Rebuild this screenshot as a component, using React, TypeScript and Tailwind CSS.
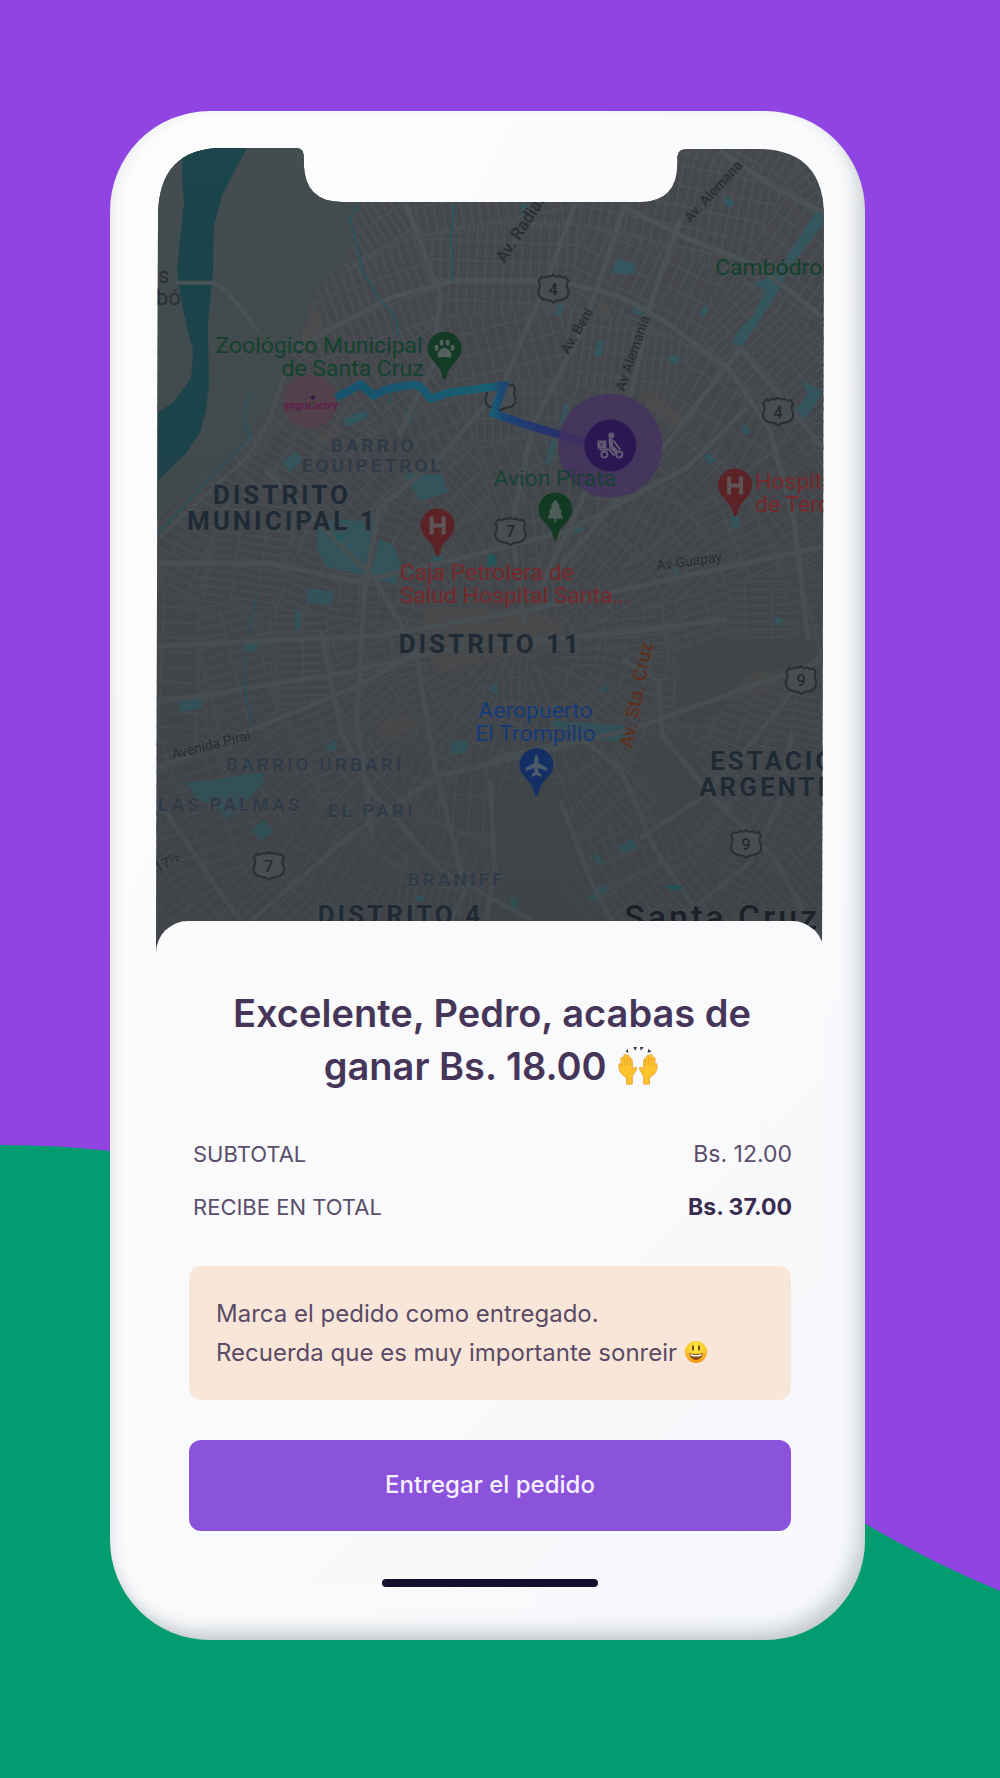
import type { ReactNode } from "react";

const CENTER = { x: 530, y: 640 };
const RINGS = [0, 70, 140, 205, 262, 335, 420, 520, 640];
const SECTORS = 16;

function polar(radius: number, turn: number) {
  const angle = (turn / SECTORS) * Math.PI * 2 + 0.12;
  const x = CENTER.x + Math.cos(angle) * radius;
  const y = CENTER.y + Math.sin(angle) * radius;
  return `${x.toFixed(1)} ${y.toFixed(1)}`;
}

const blocks = RINGS.slice(1).flatMap((outer, ring) =>
  Array.from({ length: SECTORS }, (_, s) => ({
    id: `${ring}-${s}`,
    pattern: (s * 3 + ring * 5) % 8,
    turn: (s / SECTORS) * 360 + ((ring * 17) % 30),
    d: `M${polar(RINGS[ring], s)} L${polar(outer, s)} A${outer} ${outer} 0 0 1 ${polar(outer, s + 1)} L${polar(RINGS[ring], s + 1)} Z`,
  })),
);

const parks = [
  "M521 203l8 0-2 14-6-3z",
  "M617 258l19 5-3 11-22-2z",
  "M558 302l5 0-2 12-7 1z",
  "M635 304l8 1-1 10-9-3z",
  "M598 339l6 1-3 16-7-1z",
  "M672 353l8 4-5 7-7-5z",
  "M704 305l5 3-6 9-4-4z",
  "M726 195l9 6-4 6-8-5z",
  "M816 210l7 2v12L796 258 770 304 742 345l-10-1 6-14 14-14 14-26-12-8 14-5 20-22z",
  "M801 379l22 12-18 28-9-10 12-17z",
  "M745 424l6 7-5 4-6-7z",
  "M707 452l9 7-6 6-7-8z",
  "M730 513l8 1 3 12-9 2z",
  "M564 402l5 2-5 14-6 10z",
  "M552 437l4 7-6 18-6 3 4-15z",
  "M404 473l38 1 5 18-28 8z",
  "M343 418l22-9 2 8-22 10z",
  "M404 410l9 0-4 14-3 0z",
  "M282 461l14-10 5 9-12 12z",
  "M317 525l16-6 41 2-11 54-38-9-9-18z",
  "M378 539l14 5 8 19-5 21-26-6z",
  "M306 588l28 3-5 14-23-3z",
  "M294 610l6 0 0 20-6 0z",
  "M431 555l12 0-1 10-10 0z",
  "M244 643l13 0-1 8-12 0z",
  "M177 702l23-4 1 10-22 4z",
  "M184 782l28-2 34-6 12-1 5 10-12 12-25 25-11-13-18-8z",
  "M263 820l10 11-13 10-10-11z",
  "M323 748l12-9 1 13z",
  "M449 744l12-5 8 5-4 9-14 1z",
  "M490 685l7-1 0 9-6 0z",
  "M600 688l8-5-3 9-6-2z",
  "M552 720l72 5-4 18-28-5-40-12z",
  "M617 847l15-9 6 10-15 6z",
  "M592 856l6-3 5 12-5 0z",
  "M587 898l18-14 5 5-17 13z",
  "M509 900l9-3-2 12-5 1z",
  "M415 896l9 0-1 6-8 0z",
  "M774 617l8 1-1 8-7-1z",
  "M573 530l6-6 4 5-8 5z",
  "M672 567l4 2 5 10-3 1z",
];

const sandy = [
  "M310 308l8 2 4 20-22 12z",
  "M635 390l20 3 34 27-10 9-30-24z",
  "M424 606l90 2 50 14-8 22-120 30-14-30z",
  "M376 722l30-8 18 8-30 16-16 4z",
  "M730 690l22-18 34-3-10 20-45 12z",
  "M314 438l24-15 4 10-25 12z",
  "M597 300l10 2 4 14-10-2z",
];

const avenues = [
  "M175 282h34c14 1 20 12 44 44",
  "M292 350l42-24 58-30 60-16h108l60 16 44 24 66 50 40 60 24 90 14 120",
  "M405 203l35 92-8 70-34 70",
  "M575 203l-34 90-38 90-60 70-65 56-14 80-8 130 16 120",
  "M625 203l-40 120-52 100-22 100 12 100",
  "M628 208l60 30 68 26 66 52",
  "M680 218l-28 80-20 90-40 90-52 110",
  "M720 150l50 34 54 28",
  "M740 348l84 100",
  "M740 348l-70 90-120 140",
  "M157 563l110 0 90 18 90-20 120-30 120-64 60-60",
  "M157 646l120-6 100-4 150-26 296-64",
  "M157 702l190-30 110-25 180-16 90-12",
  "M157 768l200-82 60-34",
  "M157 800l60 90 30 40",
  "M240 930l110-95 90-60 110-25 90-24 184-66",
  "M265 470l110 110 40 70 20 120 30 120-30 60",
  "M320 630l20 100 30 60 70 80 90 50",
  "M490 760l90-22 40 30 34 80 40 60",
  "M622 660l36 20 4 56 50 60 60 60 52 90",
  "M640 838l60-40 54-58 70-90",
  "M690 912l60-50 30-60 12-70",
  "M490 780l4 90-10 60",
  "M560 800l30 80 26 50",
];

type LabelProps = {
  x: number;
  y: number;
  children: ReactNode;
  className?: string;
  anchor?: "start" | "middle" | "end";
  turn?: number;
};

function Label({ x, y, children, className = "", anchor = "start", turn = 0 }: LabelProps) {
  return (
    <text
      x={x}
      y={y}
      textAnchor={anchor}
      transform={turn ? `rotate(${turn} ${x} ${y})` : undefined}
      className={`stroke-[#45494d] [paint-order:stroke] [stroke-width:2px] ${className}`}
    >
      {children}
    </text>
  );
}

function Shield({ x, y, n }: { x: number; y: number; n: string }) {
  return (
    <g transform={`translate(${x} ${y})`}>
      <path
        d="M-12-12q3 2 6-1 3 2 6-1 3 3 6 1 3 3 6 1l3 4q-3 4 0 9 1 9-8 10-4 0-7 3-3-3-7-3-9-1-8-10 3-5 0-9z"
        className="fill-[#474d50] stroke-[#2a2f33] [stroke-width:2px]"
      />
      <text y="6" textAnchor="middle" className="fill-[#23292e] text-[16px] font-medium">
        {n}
      </text>
    </g>
  );
}

function Pin({ x, y, className, children }: { x: number; y: number; className: string; children: ReactNode }) {
  return (
    <g transform={`translate(${x} ${y})`}>
      <path
        d="M0 31C-2 31-2 27-4 22-7 15-17 10-17 0A17 17 0 0 1 17 0C17 10 7 15 4 22 2 27 2 31 0 31z"
        className={className}
      />
      {children}
    </g>
  );
}

const HOSPITAL_MARK = "M-6-9v18M6-9v18M-6 0h12";

function CityMap() {
  return (
    <svg
      viewBox="155 147 669 806"
      role="img"
      aria-label="Mapa de la ruta de entrega"
      className="block h-auto w-full font-[Roboto,sans-serif]"
    >
      <defs>
        <clipPath id="screen">
          <path d="M155 953L157 216Q157 147 222 147H295Q303 147 303 155V163Q304 201 341 201H641Q677 200 677 163V156Q678 148 686 148H757Q824 148 824 216L822 953z" />
        </clipPath>
        <linearGradient id="dim" x1="0" y1="0" x2="0" y2="1">
          <stop offset="0" stopColor="#30363a" stopOpacity="0" />
          <stop offset="1" stopColor="#30363a" stopOpacity="0.3" />
        </linearGradient>
        <linearGradient id="route" gradientUnits="userSpaceOnUse" x1="335" y1="0" x2="600" y2="0">
          <stop offset="0" stopColor="#17526c" />
          <stop offset="0.58" stopColor="#175f72" />
          <stop offset="0.64" stopColor="#1c4474" />
          <stop offset="1" stopColor="#301f64" />
        </linearGradient>
        {blocks.map((b) => (
          <pattern
            key={b.id}
            id={`streets-${b.id}`}
            width={[24, 30, 20, 34, 26, 22, 38, 28][b.pattern]}
            height={[8, 10, 9, 13, 8, 11, 15, 9][b.pattern]}
            patternUnits="userSpaceOnUse"
            patternTransform={`rotate(${b.turn})`}
          >
            <path d="M0 1H40M1 0V20" className="fill-none stroke-[#4a5053] [stroke-width:2px]" />
          </pattern>
        ))}
      </defs>

      <g clipPath="url(#screen)">
        <rect x="155" y="147" width="669" height="806" className="fill-[#46484d]" />
        <g className="stroke-[#4a5053]">
          {blocks.map((b) => (
            <path key={b.id} d={b.d} fill={`url(#streets-${b.id})`} />
          ))}
        </g>

        {/* airport and open land */}
        <path
          d="M496 790l50-12 20 40 46 130H490zM642 745l48-4 20 60-46 36zM676 655l40-18 100 4-4 30-80 30-40 24-16-10z"
          className="fill-[#44494c]"
        />
        <path d="M520 815l70 110M534 805l70 110" className="fill-none stroke-[#4b5154]" />

        {sandy.map((d) => (
          <path key={d} d={d} className="fill-[#514f4f] opacity-60" />
        ))}
        {parks.map((d) => (
          <path key={d} d={d} className="fill-[#345860]" />
        ))}
        <g className="fill-none stroke-[#4c5457] [stroke-linejoin:round] [stroke-width:5px]">
          {avenues.map((d) => (
            <path key={d} d={d} />
          ))}
        </g>

        {/* west bank and the Piraí river */}
        <path
          d="M150 147h200l4 56-4 42-8 22-26 16-10 30-14 34-24 60-40 50-78 68z"
          className="fill-[#434d50]"
        />
        <path d="M285 372l-18 50-20 34-90 82" className="fill-none stroke-[#4c5356] [stroke-width:4px]" />
        <path
          d="M182 147h64l-13 24-12 24-8 30-1 45-5 54 1 60-3 26-6 22-15 22-27 26v-68l15-10 18-24q2-20 2-28l-4-16-8-34-4-30 4-40 3-28-2-30z"
          className="fill-[#1a454b]"
        />
        <path d="M175 282h34c14 1 20 12 48 48" className="fill-none stroke-[#4c5356] [stroke-width:4px]" />
        <g className="fill-none stroke-[#2a565e] [stroke-width:2px]">
          <path d="M355 203l2 4-8 10 6 23 7 30 16 27 14 15q6 10 5 24" />
          <path d="M454 203l-4 37 2 10-1 30" />
          <path d="M248 393l-6 27 8 16-93 96M243 424l8 12" />
          <path d="M392 385l-3 18M256 595l-10 40M244 655l-1 28 8 44" />
        </g>
        <path
          d="M256 777l4-5 3 4zM336 535h5v5h-5zM488 554h6l1 10-8 2zM667 886q8-3 16 2-8 4-16 0z"
          className="fill-[#1b5f62]"
        />

        <rect x="155" y="147" width="669" height="806" fill="url(#dim)" />

        <g className="fill-[#2b2f34] text-[15px] font-medium">
          <Label x={504} y={263} turn={-57} className="text-[17px]">Av. Radial 27</Label>
          <Label x={690} y={222} turn={-47} className="text-[14px]">Av. Alemana</Label>
          <Label x={568} y={354} turn={-60} className="text-[14px]">Av. Beni</Label>
          <Label x={624} y={391} turn={-71} className="text-[14px]">Av Alemania</Label>
        </g>
        <g className="fill-[#262c31] text-[14px]">
          <Label x={657} y={570} turn={-8}>Av Guapay</Label>
          <Label x={172} y={759} turn={-14}>Avenida Pirai</Label>
          <Label x={157} y={873} turn={-30}>17½</Label>
        </g>
        <g className="fill-[#2a3136] text-[22px]">
          <Label x={157} y={282}>s</Label>
          <Label x={155} y={304}>bó</Label>
        </g>
        <Label x={632} y={749} turn={-79} className="fill-[#5a3020] text-[19px] font-medium">
          Av. Sta. Cruz
        </Label>

        <Shield x={553} y={288} n="4" />
        <Shield x={778} y={411} n="4" />
        <Shield x={500} y={396} n="" />
        <Shield x={510} y={531} n="7" />
        <Shield x={801} y={680} n="9" />
        <Shield x={746} y={844} n="9" />
        <Shield x={268} y={866} n="7" />

        <g className="fill-[#303b48] text-[19px] font-bold tracking-[3px]">
          <Label x={330} y={451}>BARRIO</Label>
          <Label x={301} y={471}>EQUIPETROL</Label>
          <Label x={225} y={771}>BARRIO URBARÍ</Label>
          <Label x={157} y={811}>LAS PALMAS</Label>
          <Label x={327} y={817}>EL PARI</Label>
          <Label x={407} y={886}>BRANIFF</Label>
        </g>
        <g className="fill-[#1f2a35] text-[26px] font-bold tracking-[3px]">
          <Label x={212} y={504}>DISTRITO</Label>
          <Label x={186} y={530}>MUNICIPAL 1</Label>
          <Label x={398} y={653}>DISTRITO 11</Label>
          <Label x={710} y={770}>ESTACIÓN</Label>
          <Label x={699} y={796}>ARGENTINA</Label>
          <Label x={317} y={924}>DISTRITO 4</Label>
        </g>
        <Label x={624} y={929} className="fill-[#1b2128] text-[34px] font-medium tracking-[3px]">
          Santa Cruz
        </Label>

        <g className="fill-[#12422c] text-[23px]">
          <Label x={422} y={352} anchor="end">Zoológico Municipal</Label>
          <Label x={423} y={375} anchor="end">de Santa Cruz</Label>
          <Label x={715} y={274}>Cambódromo</Label>
        </g>
        <g className="fill-[#78272a] text-[23px]">
          <Label x={399} y={580}>Caja Petrolera de</Label>
          <Label x={399} y={603}>Salud Hospital Santa...</Label>
          <Label x={755} y={489}>Hospital</Label>
          <Label x={755} y={512}>de Tercer</Label>
        </g>
        <g className="fill-[#143a78] text-[23px]">
          <Label x={535} y={718} anchor="middle">Aeropuerto</Label>
          <Label x={535} y={741} anchor="middle">El Trompillo</Label>
        </g>

        {/* drop-off store */}
        <circle cx="309" cy="401" r="27" className="fill-[#52414a]" />
        <text x="310" y="408" textAnchor="middle" className="fill-[#5f1f4a] text-[11px] font-bold">
          yogurberry
        </text>
        <path d="M312 401v5" className="stroke-[#3c4f25] [stroke-width:2px]" />
        <circle cx="312" cy="397" r="2" className="fill-[#251a4c]" />

        <path
          d="M335 397l25-13 13 11 15-7 25-4 7 2 10 12 19-6 54-7-10 28 36 12 72 22"
          fill="none"
          stroke="url(#route)"
          className="[stroke-width:8px]"
        />

        <Pin x={444} y={348} className="fill-[#143b25]">
          <g className="fill-[#55615f]">
            <path d="M0-1c-3 0-7 4-7 7 0 5 5 2 7 2s7 3 7-2c0-3-4-7-7-7z" />
            <ellipse cx="-8" cy="-1" rx="2" ry="3" />
            <ellipse cx="8" cy="-1" rx="2" ry="3" />
            <ellipse cx="-3" cy="-6" rx="2" ry="3" />
            <ellipse cx="3" cy="-6" rx="2" ry="3" />
          </g>
        </Pin>
        <Pin x={555} y={509} className="fill-[#123a23]">
          <path d="M0-10l5 7H3l4 6H5l3 6H1v4h-2v-4h-7l3-6h-2l4-6h-2z" className="fill-[#4f5c59]" />
        </Pin>
        <Pin x={437} y={525} className="fill-[#5c2327]">
          <path d={HOSPITAL_MARK} className="fill-none stroke-[#5e5357] [stroke-width:4px]" />
        </Pin>
        <Pin x={735} y={485} className="fill-[#5c2327]">
          <path d={HOSPITAL_MARK} className="fill-none stroke-[#5e5357] [stroke-width:4px]" />
        </Pin>
        <Pin x={536} y={765} className="fill-[#142f63]">
          <path
            d="M0-10c1 0 2 2 2 4v4L11 3v3L2 3v4l3 3v2L0 10l-5 2v-2l3-3V3l-9 3V3l9-5v-4c0-2 1-4 2-4z"
            className="fill-[#4c5a6a]"
          />
        </Pin>

        {/* courier */}
        <circle cx="610" cy="445" r="52" className="fill-[#433060] opacity-75" />
        <text x="493" y="486" className="fill-[#184234] text-[23px]">
          Avion Pirata
        </text>
        <circle cx="610" cy="445" r="26" className="fill-[#2b1853]" />
        <g className="fill-none stroke-[#625a73] [stroke-width:2px]">
          <circle cx="604" cy="454" r="3" />
          <circle cx="619" cy="454" r="3" />
          <path d="M599 449h10l4 5h2M613 440l7 9" />
          <path d="M610 438l1 8 6 6" className="[stroke-width:4px]" />
        </g>
        <circle cx="611" cy="435" r="3" className="fill-[#625a73]" />
        <path d="M597 440h9v8h-9z" className="fill-[#625a73]" />
        <path d="M599 442l2 2 2-2M601 444v2" className="fill-none stroke-[#2b1853]" />
      </g>
    </svg>
  );
}

function RaisedHands() {
  const hand =
    "M12 36V29C6 26 4 22 4 17 4 13 6 14 7 17L6 10C6 7 8 7 9 10L9 7C9 4 12 4 12 7 12 5 15 5 15 8V9C17 8 18 10 18 12V21C20 17 24 18 22 21L18 28V36z";
  return (
    <svg viewBox="0 0 44 42" role="img" aria-label="manos levantadas" className="inline-block h-10 w-11 align-[-6px]">
      <g className="fill-[#fdc42e] stroke-[#eda02a]">
        <path d={hand} transform="translate(-2 4)" />
        <path d={hand} transform="matrix(-1 0 0 1 46 4)" />
        <path d="M8 14v7M11 12v8M14 14v7M36 14v7M33 12v8M30 14v7" className="fill-none" />
      </g>
      <path
        d="M9 6l2-3 1 4zM17 1h4l-2 4zM24 1h4l-3 4zM32 7l1-4 3 3z"
        className="fill-[#353b40]"
      />
    </svg>
  );
}

function Smiley() {
  return (
    <svg viewBox="0 0 24 24" role="img" aria-label="cara sonriente" className="inline-block size-6 align-[-3px]">
      <defs>
        <radialGradient id="face" cx="0.5" cy="0.3" r="0.75">
          <stop offset="0" stopColor="#fff04a" />
          <stop offset="0.6" stopColor="#fcc52c" />
          <stop offset="1" stopColor="#ee8518" />
        </radialGradient>
      </defs>
      <circle cx="12" cy="12" r="11" fill="url(#face)" />
      <ellipse cx="9" cy="8" rx="1" ry="3" className="fill-[#6b3c10]" />
      <ellipse cx="15" cy="8" rx="1" ry="3" className="fill-[#6b3c10]" />
      <path d="M5 13q7 2 14 0-1 7-7 7t-7-7z" className="fill-[#8a4a12]" />
      <path d="M6 14q6 2 12 0l-1 2q-5 1-10 0z" className="fill-white" />
    </svg>
  );
}

const totals = [
  { label: "SUBTOTAL", amount: "Bs. 12.00", strong: false },
  { label: "RECIBE EN TOTAL", amount: "Bs. 37.00", strong: true },
];

export default function App() {
  return (
    <main className="relative isolate min-h-screen bg-[#9044e2] pt-[111px] pr-[135px] pb-[138px] pl-[110px] font-[Inter,sans-serif] text-[#453659]">
      <svg
        viewBox="0 0 1000 1778"
        preserveAspectRatio="none"
        aria-hidden="true"
        className="absolute inset-0 -z-10 size-full"
      >
        <path
          d="M0 1145Q60 1145 110 1151C420 1190 640 1390 864 1523Q930 1562 1000 1591V1778H0z"
          className="fill-[#029c70]"
        />
      </svg>

      <div className="rounded-[100px] bg-linear-to-br from-[#fdfdfd] to-[#f6f8fb] pt-[37px] pr-[41px] pb-[53px] pl-[46px] shadow-[inset_-10px_-12px_18px_-4px_rgba(90,105,110,0.32),inset_8px_0_14px_-4px_rgba(120,130,140,0.14)]">
        <CityMap />

        <section className="relative -mt-8 rounded-t-[32px] bg-linear-to-br from-[#fbfbfc] to-[#f7f8fb] px-[33px] pt-[66px]">
          <h1 className="pl-1 text-center text-[38px] leading-[53px] font-semibold">
            Excelente, Pedro, acabas de
            <br />
            ganar Bs. 18.00 <RaisedHands />
          </h1>

          <dl className="mt-[35px]">
            {totals.map((row) => (
              <div key={row.label} className="-mr-px flex h-[53px] items-center justify-between pl-1 text-[#5b4e6c]">
                <dt className="text-[22px]">{row.label}</dt>
                <dd className={row.strong ? "text-[23px] font-bold text-[#3a2c50]" : "text-[23px]"}>
                  {row.amount}
                </dd>
              </div>
            ))}
          </dl>

          <p className="mt-[32px] rounded-xl bg-[#f8e7d9] px-[27px] py-[28px] text-[24px] leading-[39px] text-[#5b4a66]">
            Marca el pedido como entregado.
            <br />
            Recuerda que es muy importante sonreir <Smiley />
          </p>

          <button
            type="button"
            className="mt-[40px] h-[91px] w-full cursor-pointer rounded-xl bg-[#8b52dc] text-[24px] font-medium text-[#f6effc]"
          >
            Entregar el pedido
          </button>

          <div className="mx-auto mt-[48px] h-2 w-[216px] rounded-full bg-[#130f2c]" />
        </section>
      </div>
    </main>
  );
}
